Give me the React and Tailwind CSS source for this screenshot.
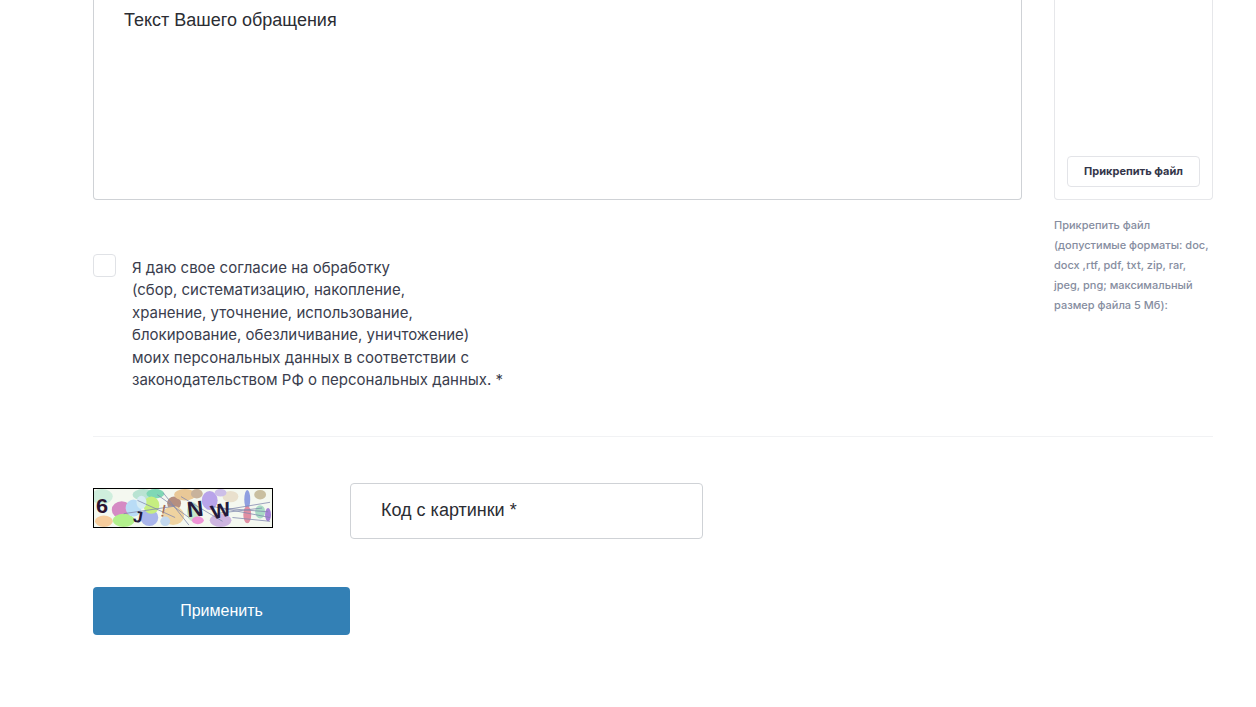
const blobs = [
  [8, 8, 11, 8, '#cfeedd'], [10, 34, 9, 6, '#f6cc9c'], [28, 22, 10, 9, '#d58ac4'], [30, 33, 11, 7, '#b2f08c'],
  [40, 20, 8, 9, '#b9dcf6'], [50, 6, 11, 6, '#b9e3d2'], [56, 30, 9, 9, '#a9b5ea'], [62, 5, 9, 5, '#7fd8b5'],
  [58, 17, 8, 9, '#c6ee80'], [48, 14, 5, 7, '#d7ecf4'], [81, 15, 7, 7, '#b58f80'], [80, 28, 11, 10, '#efd3a0'],
  [92, 6, 11, 6, '#e9c897'], [100, 24, 6, 10, '#c5e6c9'], [117, 12, 8, 10, '#b9a4ea'], [104, 5, 6, 5, '#c8b39c'],
  [105, 33, 6, 4, '#ee93d6'], [128, 33, 11, 7, '#cdb5e0'], [138, 8, 8, 6, '#e9e0cd'], [155, 11, 3, 10, '#8f9fe0'],
  [168, 6, 6, 5, '#c9bfa0'], [168, 24, 5, 7, '#a9dcc5'], [155, 27, 4, 9, '#e08fa3'], [176, 27, 3, 7, '#a583d6'],
  [128, 4, 6, 4, '#cdbfe8'], [72, 34, 5, 5, '#c3d8ee'],
]

const lines = [
  [70, 4, 96, 38], [88, 8, 130, 34], [118, 18, 178, 30], [128, 20, 176, 24], [122, 26, 170, 20], [44, 12, 82, 30],
  [64, 6, 96, 30], [30, 26, 82, 18], [132, 22, 178, 14], [140, 30, 178, 34],
]

function Captcha() {
  return (
    <svg width="180" height="40" viewBox="0 0 180 40" preserveAspectRatio="none" className="block shrink-0 mt-[5px] border border-black bg-[#f4f8f0]">
      {blobs.map(([cx, cy, rx, ry, fill], i) => (
        <ellipse key={i} cx={cx} cy={cy} rx={rx} ry={ry} fill={fill} />
      ))}
      {lines.map(([x1, y1, x2, y2], i) => (
        <line key={i} x1={x1} y1={y1} x2={x2} y2={y2} stroke="#8088ad" strokeWidth="0.8" />
      ))}
      <g fontFamily="'Liberation Sans', sans-serif" fontWeight="700" fill="#241a3a">
        <text x="2" y="25" fontSize="22" fill="#2c1430">6</text>
        <text x="40" y="35" fontSize="17" transform="rotate(10 44 28)">J</text>
        <text x="68" y="29" fontSize="18" fontWeight="400" fill="#a56a55" transform="rotate(12 70 22)">!</text>
        <text x="94" y="29" fontSize="23" transform="rotate(-6 102 22)">N</text>
        <text x="118" y="30" fontSize="21" transform="rotate(-14 128 22)">W</text>
      </g>
    </svg>
  )
}

export default function App() {
  return (
    <div className="h-[707px] overflow-hidden bg-white pl-[93px] pr-[43px] font-['Inter',sans-serif]">
      <div className="flex gap-8 border-b border-[#f1f2f4] h-[437px]">
        <div className="w-[929px]">
          <textarea
            readOnly
            placeholder="Текст Вашего обращения"
            className="block w-full h-[200px] resize-none rounded-b border border-t-0 border-[#cfd2d6] pl-[30px] pt-[8px] font-['Liberation_Sans',sans-serif] text-[18px] leading-6 outline-none placeholder:text-[#2b2d33]"
          />
          <div className="flex mt-[54px]">
            <div className="w-[23px] h-[23px] shrink-0 rounded border border-[#e0e2e6] bg-white" />
            <p className="ml-4 mt-[3px] text-[15px] leading-[22.4px] text-[#3a3d4d]">
              Я даю свое согласие на обработку<br />
              (сбор, систематизацию, накопление,<br />
              хранение, уточнение, использование,<br />
              блокирование, обезличивание, уничтожение)<br />
              моих персональных данных в соответствии с<br />
              законодательством РФ о персональных данных. *
            </p>
          </div>
        </div>
        <div className="w-[159px]">
          <div className="flex items-end h-[200px] rounded-b border border-t-0 border-[#e6e7ea] px-3 pb-3">
            <button className="w-full h-[31px] rounded border border-[#e3e4e8] bg-white text-[11px] font-bold text-[#34364a]">
              Прикрепить файл
            </button>
          </div>
          <p className="mt-[15px] text-[11px] font-medium leading-5 text-[#868da0]">
            Прикрепить файл<br />
            (допустимые форматы: doc,<br />
            docx ,rtf, pdf, txt, zip, rar,<br />
            jpeg, png; максимальный<br />
            размер файла 5 Мб):
          </p>
        </div>
      </div>

      <div className="flex items-start mt-[46px]">
        <Captcha />
        <input
          readOnly
          placeholder="Код с картинки *"
          className="ml-[77px] w-[353px] h-[56px] rounded border border-[#cfd2d6] pl-[30px] pb-[2px] font-['Liberation_Sans',sans-serif] text-[18px] outline-none placeholder:text-[#2b2d33]"
        />
      </div>

      <button className="block mt-[48px] w-[257px] h-[48px] rounded bg-[#3380b5] font-['Liberation_Sans',sans-serif] text-[16px] text-white">
        Применить
      </button>
    </div>
  )
}
